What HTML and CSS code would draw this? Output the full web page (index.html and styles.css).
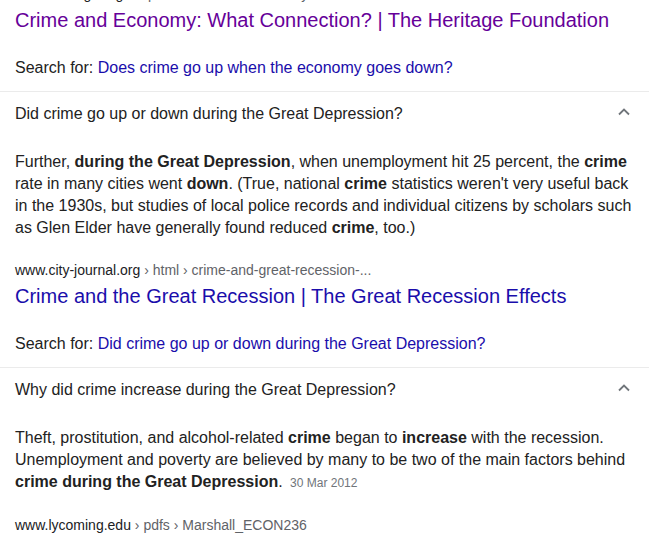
FILE: index.html
```html
<!DOCTYPE html>
<html>
<head>
<meta charset="utf-8">
<link rel="stylesheet" href="styles.css">
</head>
<body>
<div class="page">
  <div class="result first">
    <div class="url"><span class="domain">www.heritage.org</span><span class="path"> › report › crime-and-economy-what-connection</span></div>
    <div class="title visited">Crime and Economy: What Connection? | The Heritage Foundation</div>
  </div>
  <div class="search">Search for: <span class="link">Does crime go up when the economy goes down?</span></div>
  <div class="divider"></div>
  <div class="question">
    <span>Did crime go up or down during the Great Depression?</span>
    <svg class="chev" width="14" height="9" viewBox="0 0 14 9"><path d="M2 7.5 L7 2.5 L12 7.5" fill="none" stroke="#70757a" stroke-width="1.8"/></svg>
  </div>
  <div class="answer">Further, <b>during the Great Depression</b>, when unemployment hit 25 percent, the <b>crime</b> rate in many cities went <b>down</b>. (True, national <b>crime</b> statistics weren't very useful back in the 1930s, but studies of local police records and individual citizens by scholars such as Glen Elder have generally found reduced <b>crime</b>, too.)</div>
  <div class="result">
    <div class="url"><span class="domain">www.city-journal.org</span><span class="path"> › html › crime-and-great-recession-...</span></div>
    <div class="title">Crime and the Great Recession | The Great Recession Effects</div>
  </div>
  <div class="search">Search for: <span class="link">Did crime go up or down during the Great Depression?</span></div>
  <div class="divider"></div>
  <div class="question">
    <span>Why did crime increase during the Great Depression?</span>
    <svg class="chev" width="14" height="9" viewBox="0 0 14 9"><path d="M2 7.5 L7 2.5 L12 7.5" fill="none" stroke="#70757a" stroke-width="1.8"/></svg>
  </div>
  <div class="answer">Theft, prostitution, and alcohol-related <b>crime</b> began to <b>increase</b> with the recession. Unemployment and poverty are believed by many to be two of the main factors behind <b>crime during the Great Depression</b>. <span class="date">30 Mar 2012</span></div>
  <div class="result">
    <div class="url"><span class="domain">www.lycoming.edu</span><span class="path"> › pdfs › Marshall_ECON236</span></div>
  </div>
</div>
</body>
</html>
```
FILE: styles.css
```css
html, body {
  margin: 0;
  padding: 0;
  background: #fff;
}
body {
  font-family: "Liberation Sans", Arial, sans-serif;
  color: #222;
  overflow: hidden;
}
.page {
  width: 649px;
}
.result {
  padding: 0 15px;
}
.result.first {
  margin-top: -16px;
}
.answer + .result {
  margin-top: 21px;
}
.url {
  font-size: 14px;
  line-height: 20px;
  white-space: nowrap;
}
.domain {
  color: #202124;
}
.path {
  color: #5f6368;
}
.title {
  font-size: 20px;
  line-height: 26px;
  padding-top: 3px;
  color: #1a0dab;
  white-space: nowrap;
}
.title.visited {
  color: #660099;
}
.search {
  padding: 24px 15px 12px;
  font-size: 16px;
  line-height: 22px;
  color: #222;
}
.link {
  color: #1a0dab;
}
.divider {
  height: 1px;
  background: #ebebeb;
}
.question {
  display: flex;
  justify-content: space-between;
  align-items: center;
  padding: 11px 18px 0 15px;
  font-size: 16px;
  line-height: 22px;
  color: #222;
}
.chev {
  display: block;
  margin-top: -5px;
}
.answer {
  padding: 26px 15px 0;
  font-size: 16px;
  line-height: 22px;
  color: #222;
}
.answer b {
  font-weight: bold;
}
.date {
  font-size: 12px;
  color: #70757a;
  margin-left: 3px;
}
```
